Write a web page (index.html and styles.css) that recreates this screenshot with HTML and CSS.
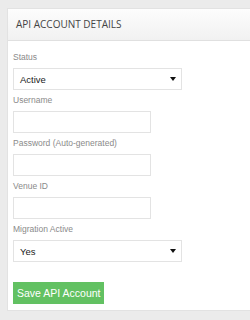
FILE: index.html
```html
<!DOCTYPE html>
<html lang="en">
<head>
    <meta charset="UTF-8">
    <meta name="viewport" content="width=device-width, initial-scale=1.0">
    <title>API Account Details</title>
    <link rel="stylesheet" href="styles.css">
</head>
<body>
    <div class="panel">
        <div class="panel-heading">API ACCOUNT DETAILS</div>
        <form class="panel-body">
            <div class="field">
                <label for="status">Status</label>
                <div class="select">
                    <span>Active</span>
                    <span class="caret"></span>
                </div>
            </div>
            <div class="field">
                <label for="username">Username</label>
                <input type="text" id="username" class="text-input">
            </div>
            <div class="field">
                <label for="password">Password (Auto-generated)</label>
                <input type="text" id="password" class="text-input">
            </div>
            <div class="field">
                <label for="venue">Venue ID</label>
                <input type="text" id="venue" class="text-input">
            </div>
            <div class="field">
                <label for="migration">Migration Active</label>
                <div class="select">
                    <span>Yes</span>
                    <span class="caret"></span>
                </div>
            </div>
            <button type="button" class="btn-save">Save API Account</button>
        </form>
    </div>
</body>
</html>
```

FILE: styles.css
```css
body, html {
    margin: 0;
    padding: 0;
    background-color: #ebebeb;
    font-family: 'Liberation Sans', Arial, sans-serif;
}
body {
    padding: 8px 0 0 7px;
}
.panel {
    background-color: #fff;
    border: 1px solid #e2e2e2;
    border-right: none;
    box-sizing: border-box;
}
.panel-heading {
    height: 31px;
    line-height: 31px;
    padding-left: 8px;
    font-family: 'Open Sans', sans-serif;
    font-size: 10px;
    color: #444;
    background: linear-gradient(#fdfdfd, #f1f1f1);
    border-bottom: 1px solid #e0e0e0;
}
.panel-body {
    padding: 10px 0 6px 5px;
}
.field {
    margin-bottom: 4px;
}
label {
    display: block;
    font-size: 8.5px;
    color: #8a8a8a;
    height: 12px;
    line-height: 12px;
    margin-bottom: 5px;
}
.select, .text-input {
    height: 22px;
    border: 1px solid #e3e3e3;
    box-sizing: border-box;
    background-color: #fff;
}
.select {
    width: 169px;
    display: flex;
    align-items: center;
    justify-content: space-between;
    padding: 0 5px 0 6px;
    font-size: 9.5px;
    color: #222;
}
.caret {
    width: 0;
    height: 0;
    border-left: 3px solid transparent;
    border-right: 3px solid transparent;
    border-top: 4px solid #111;
}
.text-input {
    display: block;
    width: 138px;
    margin: 0;
    padding: 0;
}
.btn-save {
    display: block;
    margin-top: 20px;
    height: 22px;
    padding: 0 4px;
    border: none;
    background-color: #62c162;
    color: #fff;
    font-family: 'Liberation Sans', Arial, sans-serif;
    font-size: 10.5px;
}
```
